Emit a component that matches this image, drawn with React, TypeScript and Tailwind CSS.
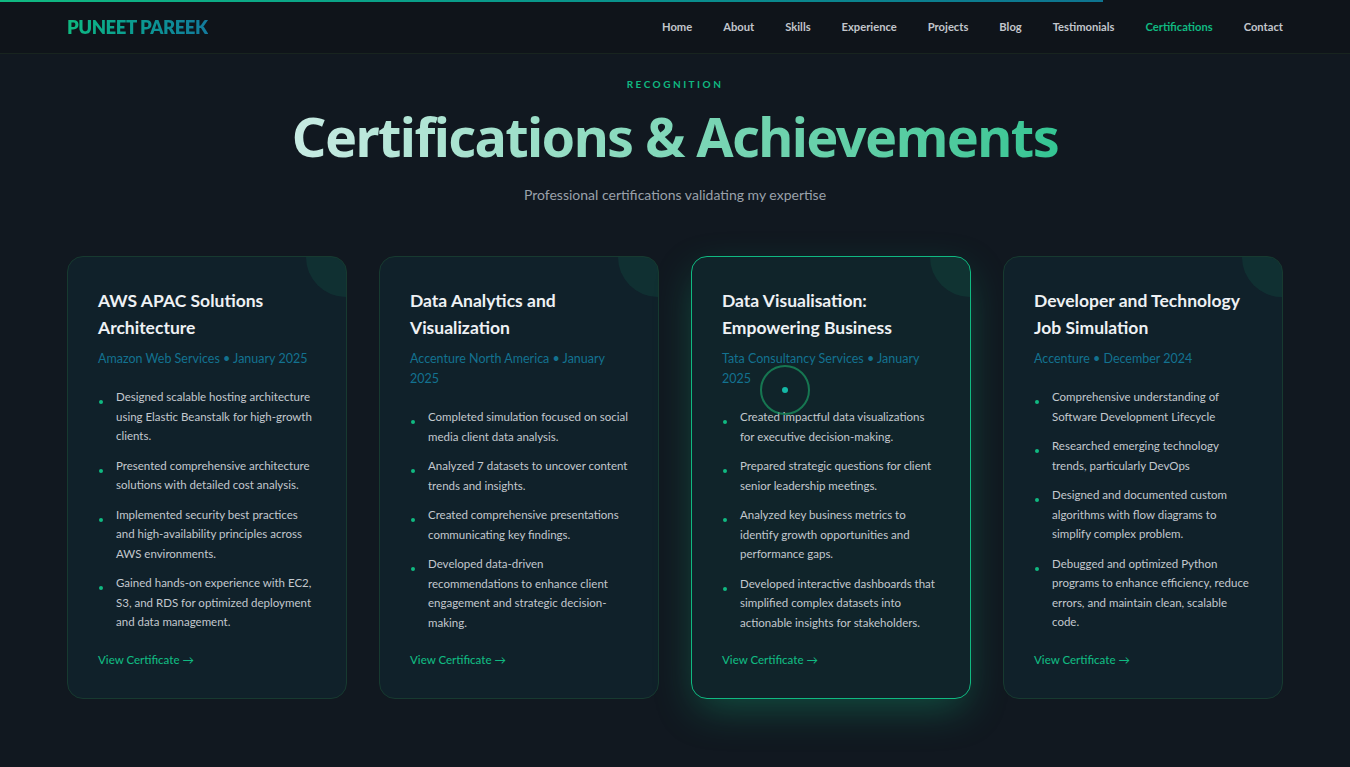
import React from 'react';

interface Cert {
  title: string;
  issuer: string;
  date: string;
  points: string[];
  active?: boolean;
}

const certs: Cert[] = [
  {
    title: 'AWS APAC Solutions Architecture',
    issuer: 'Amazon Web Services',
    date: 'January 2025',
    points: [
      'Designed scalable hosting architecture using Elastic Beanstalk for high-growth clients.',
      'Presented comprehensive architecture solutions with detailed cost analysis.',
      'Implemented security best practices and high-availability principles across AWS environments.',
      'Gained hands-on experience with EC2, S3, and RDS for optimized deployment and data management.',
    ],
  },
  {
    title: 'Data Analytics and Visualization',
    issuer: 'Accenture North America',
    date: 'January 2025',
    points: [
      'Completed simulation focused on social media client data analysis.',
      'Analyzed 7 datasets to uncover content trends and insights.',
      'Created comprehensive presentations communicating key findings.',
      'Developed data-driven recommendations to enhance client engagement and strategic decision-making.',
    ],
  },
  {
    title: 'Data Visualisation: Empowering Business',
    issuer: 'Tata Consultancy Services',
    date: 'January 2025',
    active: true,
    points: [
      'Created impactful data visualizations for executive decision-making.',
      'Prepared strategic questions for client senior leadership meetings.',
      'Analyzed key business metrics to identify growth opportunities and performance gaps.',
      'Developed interactive dashboards that simplified complex datasets into actionable insights for stakeholders.',
    ],
  },
  {
    title: 'Developer and Technology Job Simulation',
    issuer: 'Accenture',
    date: 'December 2024',
    points: [
      'Comprehensive understanding of Software Development Lifecycle',
      'Researched emerging technology trends, particularly DevOps',
      'Designed and documented custom algorithms with flow diagrams to simplify complex problem.',
      'Debugged and optimized Python programs to enhance efficiency, reduce errors, and maintain clean, scalable code.',
    ],
  },
];

const navLinks = ['Home', 'About', 'Skills', 'Experience', 'Projects', 'Blog', 'Testimonials', 'Certifications', 'Contact'];

const Navbar = () => {
  return (
    <header className="relative h-[54px] bg-[#0f141a] border-b border-[#18241f]">
      {/* scroll progress */}
      <div className="absolute top-0 left-0 h-[2px] w-[1103px] bg-gradient-to-r from-[#10b981] to-[#0e7490]" />
      <div className="max-w-7xl mx-auto px-8 pt-[2px] h-full flex items-center justify-between">
        <div className="text-[18.5px] font-extrabold tracking-tight bg-gradient-to-r from-[#10b981] to-[#137a9c] bg-clip-text text-transparent">
          PUNEET PAREEK
        </div>
        <nav className="flex items-center gap-[31px] text-[11.2px] font-bold">
          {navLinks.map((link) => (
            <span
              key={link}
              className={link === 'Certifications' ? 'text-[#10b981]' : 'text-[#c2c6cc]'}
            >
              {link}
            </span>
          ))}
        </nav>
      </div>
    </header>
  );
};

const CertCard = ({ cert }: { cert: Cert }) => {
  return (
    <div
      className={
        cert.active
          ? 'relative overflow-hidden rounded-2xl border border-[#10b981] bg-[#10242a] p-[30px] shadow-[0_14px_40px_-6px_rgba(16,185,129,0.35)]'
          : 'relative overflow-hidden rounded-2xl border border-[#173a30] bg-[#10212a] p-[30px]'
      }
    >
      <div className="absolute -top-10 -right-10 w-20 h-20 rounded-full bg-[#10b981]/10" />
      <h3 className="relative text-[17.5px] font-bold leading-[27px] text-[#eef1f4]">{cert.title}</h3>
      <p className="mt-[8px] text-[12.5px] leading-[20px] text-[#137290]">
        {cert.issuer} • {cert.date}
      </p>
      <ul className="mt-[18px] mb-5 flex flex-col gap-[10px]">
        {cert.points.map((point, i) => (
          <li key={i} className="relative pl-[18px] text-[11.5px] leading-[19.5px] text-[#c3c8ce]">
            <span className="absolute left-[1px] top-[13px] w-[4px] h-[4px] rounded-full bg-[#10b981]" />
            {point}
          </li>
        ))}
      </ul>
      <a className="block text-[11.5px] leading-4 font-medium text-[#10b981]">View Certificate →</a>
    </div>
  );
};

const App = () => {
  return (
    <div
      className="relative min-h-[767px] overflow-hidden bg-[#111820] text-white"
      style={{ fontFamily: 'Lato, "Noto Sans", sans-serif' }}
    >
      <Navbar />
      <section className="max-w-7xl mx-auto px-8 pt-[23px] pb-16">
        <div className="text-center">
          <div className="text-[10px] font-bold tracking-[0.25em] text-[#10b981]">RECOGNITION</div>
          <h2 className="mt-[9px] text-[54px] leading-[70px] font-bold tracking-[-0.03em] font-['Noto_Sans',sans-serif] bg-gradient-to-r from-[#c8ebe3] via-[#7fd7b8] to-[#34c593] bg-clip-text text-transparent inline-block">
            Certifications &amp; Achievements
          </h2>
          <p className="mt-[13px] text-[14px] text-[#9aa1aa]">Professional certifications validating my expertise</p>
        </div>
        <div className="mt-[51px] grid grid-cols-4 gap-8">
          {certs.map((cert) => (
            <CertCard key={cert.title} cert={cert} />
          ))}
        </div>
      </section>
      {/* custom cursor */}
      <div className="absolute left-[760px] top-[365px] w-[50px] h-[50px] rounded-full border-2 border-[#1a9a62]/70 flex items-center justify-center pointer-events-none">
        <div className="w-[6px] h-[6px] rounded-full bg-[#14b8a6]" />
      </div>
    </div>
  );
};

export default App;
